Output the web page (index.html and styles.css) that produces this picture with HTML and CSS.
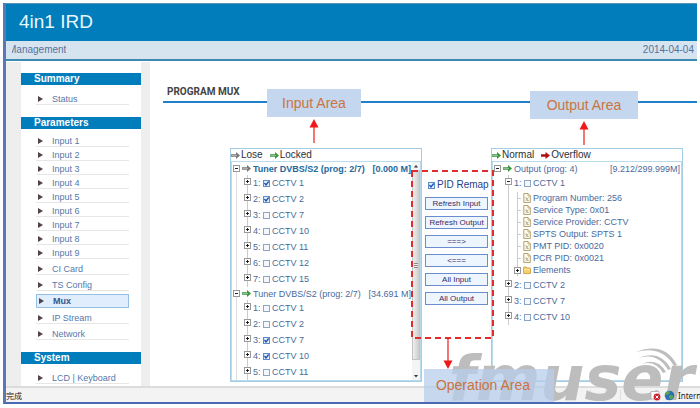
FILE: index.html
```
<!DOCTYPE html>
<html lang="en">
<head>
  <meta charset="utf-8">
  <title>4in1 IRD</title>
  <link rel="stylesheet" href="styles.css">
</head>
<body>
  <!-- shared icons -->
  <svg class="defs" width="0" height="0">
    <symbol id="arrow" viewBox="0 0 9 7">
      <path d="M0 2.2H5V0L9 3.5L5 7V4.8H0Z" fill="currentColor"/>
      <path d="M0.5 3.5H6" stroke="#fff" stroke-width="0.7" opacity="0.6"/>
    </symbol>
    <symbol id="arrow-solid" viewBox="0 0 9 7">
      <path d="M0 2.2H4.5V0L9 3.5L4.5 7V4.8H0Z" fill="currentColor"/>
    </symbol>
    <symbol id="page" viewBox="0 0 8 10">
      <path d="M0.8 0.5H5L7.3 2.8V9.5H0.8Z" fill="#fffbe8" stroke="#a99a62" stroke-width="0.9"/>
      <path d="M5 0.5V3H7.3" fill="none" stroke="#a99a62" stroke-width="0.7"/>
      <path d="M2.2 5H4V7.5H5.8M2.5 7.8L5.5 4.6" fill="none" stroke="#a3a08c" stroke-width="0.8"/>
    </symbol>
    <symbol id="folder" viewBox="0 0 8 10">
      <path d="M0.4 8V2.6Q0.4 2 1 2H3L4 3H7Q7.6 3 7.6 3.6V8Q7.6 8.6 7 8.6H1Q0.4 8.6 0.4 8Z" fill="#f7cf6b" stroke="#c9962e" stroke-width="0.8"/>
      <path d="M1 4.4H7" stroke="#fff0b8" stroke-width="0.8"/>
    </symbol>
    <symbol id="pointer" viewBox="0 0 10 24">
      <path d="M5 7V24" stroke="#f01818" stroke-width="1.2"/>
      <path d="M5 0L9.5 8.5H0.5Z" fill="#f01818"/>
    </symbol>
  </svg>

  <div class="window">
    <header class="header">
      <h1>4in1 IRD</h1>
    </header>
    <div class="subbar">
      <span class="crumb">Management</span>
      <span>2014-04-04</span>
    </div>

    <div class="page">
      <nav class="sidebar">
        <h2>Summary</h2>
        <ul class="menu">
          <li><a href="#">Status</a></li>
        </ul>
        <h2>Parameters</h2>
        <ul class="menu">
          <li class="short"><a href="#">Input 1</a></li>
          <li class="short"><a href="#">Input 2</a></li>
          <li class="short"><a href="#">Input 3</a></li>
          <li class="short"><a href="#">Input 4</a></li>
          <li class="short"><a href="#">Input 5</a></li>
          <li class="short"><a href="#">Input 6</a></li>
          <li class="short"><a href="#">Input 7</a></li>
          <li class="short"><a href="#">Input 8</a></li>
          <li class="short"><a href="#">Input 9</a></li>
          <li><a href="#">CI Card</a></li>
          <li><a href="#">TS Config</a></li>
          <li class="active"><a href="#">Mux</a></li>
          <li><a href="#">IP Stream</a></li>
          <li><a href="#">Network</a></li>
        </ul>
        <h2>System</h2>
        <ul class="menu">
          <li><a href="#">LCD | Keyboard</a></li>
        </ul>
      </nav>

      <main class="main">
        <h3>PROGRAM MUX</h3>

        <div class="mux">
          <section class="panel">
            <div class="legend">
              <svg class="ico gray"><use href="#arrow"/></svg><span>Lose</span>
              <svg class="ico green"><use href="#arrow"/></svg><span>Locked</span>
            </div>
            <div class="tree">
              <div class="nodes linked">
                <div class="tuner lose">
                  <button class="toggle open" aria-label="Collapse"></button>
                  <svg class="ico gray"><use href="#arrow"/></svg>
                  <span>Tuner DVBS/S2 (prog: 2/7)</span><span class="rate">[0.000 M]</span>
                </div>
                <ul class="channels">
                  <li><button class="toggle" aria-label="Expand"></button><span class="num">1:</span><label><input type="checkbox" checked>CCTV 1</label></li>
                  <li><button class="toggle" aria-label="Expand"></button><span class="num">2:</span><label><input type="checkbox" checked>CCTV 2</label></li>
                  <li><button class="toggle" aria-label="Expand"></button><span class="num">3:</span><label><input type="checkbox">CCTV 7</label></li>
                  <li><button class="toggle" aria-label="Expand"></button><span class="num">4:</span><label><input type="checkbox">CCTV 10</label></li>
                  <li><button class="toggle" aria-label="Expand"></button><span class="num">5:</span><label><input type="checkbox">CCTV 11</label></li>
                  <li><button class="toggle" aria-label="Expand"></button><span class="num">6:</span><label><input type="checkbox">CCTV 12</label></li>
                  <li><button class="toggle" aria-label="Expand"></button><span class="num">7:</span><label><input type="checkbox">CCTV 15</label></li>
                </ul>
                <div class="tuner">
                  <button class="toggle open" aria-label="Collapse"></button>
                  <svg class="ico green"><use href="#arrow"/></svg>
                  <span>Tuner DVBS/S2 (prog: 2/7)</span><span class="rate">[34.691 M]</span>
                </div>
                <ul class="channels">
                  <li><button class="toggle" aria-label="Expand"></button><span class="num">1:</span><label><input type="checkbox">CCTV 1</label></li>
                  <li><button class="toggle" aria-label="Expand"></button><span class="num">2:</span><label><input type="checkbox">CCTV 2</label></li>
                  <li><button class="toggle" aria-label="Expand"></button><span class="num">3:</span><label><input type="checkbox" checked>CCTV 7</label></li>
                  <li><button class="toggle" aria-label="Expand"></button><span class="num">4:</span><label><input type="checkbox" checked>CCTV 10</label></li>
                  <li><button class="toggle" aria-label="Expand"></button><span class="num">5:</span><label><input type="checkbox">CCTV 11</label></li>
                </ul>
              </div>
              <div class="scrollbar">
                <svg viewBox="0 0 8 8"><path d="M2 5.5L4 3L6 5.5Z" fill="#333"/></svg>
                <div class="thumb"></div>
                <svg viewBox="0 0 8 8"><path d="M2 3L4 5.5L6 3Z" fill="#333"/></svg>
              </div>
            </div>
            <div class="note note-input">Input Area</div>
            <svg class="pointer pointer-input"><use href="#pointer"/></svg>
          </section>

          <section class="ops">
            <label class="remap"><input type="checkbox" checked>PID Remap</label>
            <button class="btn">Refresh Input</button>
            <button class="btn">Refresh Output</button>
            <button class="btn">===&gt;</button>
            <button class="btn">&lt;===</button>
            <button class="btn">All Input</button>
            <button class="btn">All Output</button>
            <svg class="frame"><rect x="1" y="1" width="81" height="167"/></svg>
            <div class="note note-ops">Operation Area</div>
            <svg class="pointer pointer-ops" viewBox="0 0 10 31"><path d="M5 0V24" stroke="#f01818" stroke-width="1.2"/><path d="M5 31L9.5 22.5H0.5Z" fill="#f01818"/></svg>
          </section>

          <section class="panel">
            <div class="legend">
              <svg class="ico green"><use href="#arrow"/></svg><span>Normal</span>
              <svg class="ico red"><use href="#arrow-solid"/></svg><span>Overflow</span>
            </div>
            <div class="tree">
              <div class="nodes">
                <div class="tuner">
                  <button class="toggle open" aria-label="Collapse"></button>
                  <svg class="ico green"><use href="#arrow"/></svg>
                  <span>Output (prog: 4)</span><span class="rate">[9.212/299.999M]</span>
                </div>
                <ul class="channels">
                  <li><button class="toggle open" aria-label="Collapse"></button><span class="num">1:</span><label><input type="checkbox">CCTV 1</label></li>
                  <li class="sub">
                    <ul class="details">
                      <li><i class="tick"></i><svg><use href="#page"/></svg>Program Number: 256</li>
                      <li><i class="tick"></i><svg><use href="#page"/></svg>Service Type: 0x01</li>
                      <li><i class="tick"></i><svg><use href="#page"/></svg>Service Provider: CCTV</li>
                      <li><i class="tick"></i><svg><use href="#page"/></svg>SPTS Output: SPTS 1</li>
                      <li><i class="tick"></i><svg><use href="#page"/></svg>PMT PID: 0x0020</li>
                      <li><i class="tick"></i><svg><use href="#page"/></svg>PCR PID: 0x0021</li>
                      <li><button class="toggle" aria-label="Expand"></button><svg><use href="#folder"/></svg>Elements</li>
                    </ul>
                  </li>
                  <li><button class="toggle" aria-label="Expand"></button><span class="num">2:</span><label><input type="checkbox">CCTV 2</label></li>
                  <li><button class="toggle" aria-label="Expand"></button><span class="num">3:</span><label><input type="checkbox">CCTV 7</label></li>
                  <li><button class="toggle" aria-label="Expand"></button><span class="num">4:</span><label><input type="checkbox">CCTV 10</label></li>
                </ul>
              </div>
            </div>
            <div class="note note-output">Output Area</div>
            <svg class="pointer pointer-output"><use href="#pointer"/></svg>
          </section>
        </div>
      </main>
    </div>

    <footer class="statusbar">
      <span class="done" lang="zh">完成</span>
      <span class="cell"></span><span class="cell"></span><span class="cell"></span><span class="cell"></span>
      <svg class="blocked" viewBox="0 0 11 11">
        <path d="M1 1.5H9V9H1Z" fill="#fff" stroke="#aaa" stroke-width="0.8"/>
        <circle cx="7" cy="7" r="3.4" fill="#d02030"/>
        <path d="M5.6 5.6L8.4 8.4M8.4 5.6L5.6 8.4" stroke="#fff" stroke-width="1"/>
      </svg>
      <svg class="globe" viewBox="0 0 11 11">
        <circle cx="5.5" cy="5.5" r="4.8" fill="#2c70b8"/>
        <path d="M2 2.5Q4 0.8 6 1.6L5 4L3 5L1 4.8ZM5 5.5L8 5L9.5 6.8L7 9.6L5.4 8.4Z" fill="#58a846"/>
      </svg>
      <span class="zone">Intern</span>
    </footer>

    <div class="brand">
      <span>fmuser</span>
      <svg viewBox="0 0 46 26" fill="#bdbdbd">
        <path d="M4 4Q32 -7 45 17L42 18Q30 -3 4 4Z"/>
        <path d="M6 10Q28 1 39 21L36 22Q26 4 6 10Z"/>
        <path d="M10 16Q25 9 34 24L31 25Q23 12 10 16Z"/>
      </svg>
    </div>
  </div>
</body>
</html>
```
FILE: styles.css
```
* {
  box-sizing: border-box;
}

body {
  margin: 0;
  background: #fff;
  font-family: "Liberation Sans", Arial, sans-serif;
  font-size: 9px;
  color: #4a6a9c;
  overflow: hidden;
}

h1, h2, h3, ul {
  margin: 0;
  padding: 0;
}

ul {
  list-style: none;
}

.defs {
  display: none;
}

.window {
  position: relative;
  margin: 3px 0 0 3px;
  border-left: 3px solid #5a78b8;
  border-bottom: 2px solid #4a68b4;
  overflow: hidden;
}

/* top bars */
.header {
  margin-right: 3px;
  padding: 6px 13px 8px;
  border-top: 1px solid #5b93b5;
  background: #007dba;
}

.header h1 {
  font-size: 19px;
  line-height: 23px;
  font-weight: normal;
  color: #e8f6fd;
}

.subbar {
  display: flex;
  justify-content: space-between;
  margin-right: 3px;
  padding: 0 3px 0 6px;
  border-bottom: 2px solid #3c8ab2;
  background: #d6e4f0;
  font-size: 10px;
  line-height: 18px;
  color: #56729c;
}

.crumb {
  overflow: hidden;
  text-indent: -4px;
}

.page {
  display: flex;
  padding-top: 1px;
}

/* left menu */
.sidebar {
  flex: none;
  width: 144px;
  padding: 11px 0 2px;
  border-left: 15px solid #eee;
  border-right: 9px solid #eee;
}

.sidebar h2 {
  padding-left: 13px;
  background: #007dba;
  font-size: 10px;
  line-height: 12px;
  color: #fff;
}

.menu {
  padding: 4px 12px 12px 15px;
}

.menu:last-child {
  padding-bottom: 0;
}

.menu li {
  padding-top: 6px;
  border-bottom: 1px solid #e6e6e6;
}

.menu .short {
  padding-top: 4px;
}

.menu a {
  display: flex;
  align-items: center;
  line-height: 9px;
  color: #5578ac;
  text-decoration: none;
}

.menu a::before {
  content: "";
  margin: 0 9px 2px 2px;
  border-left: 5px solid #514448;
  border-top: 3px solid transparent;
  border-bottom: 3px solid transparent;
}

.menu .active {
  margin-top: 3px;
  padding: 2px 0 1px;
  border: 1px solid #94c0e6;
  background: #dfedfc;
}

.menu .active a {
  font-weight: bold;
  color: #35558c;
}

/* content */
.main {
  flex: 1;
  padding: 24px 3px 0 13px;
}

.main h3 {
  padding: 0 4px 3px;
  border-bottom: 2px solid #1f7fc8;
  font-family: Roboto, sans-serif;
  font-size: 10px;
  line-height: 12px;
  color: #444;
}

.mux {
  display: grid;
  grid-template-columns: 1fr 69px 1fr;
  margin: 45px 14px 0 67px;
}

.panel {
  position: relative;
  border: 1px solid #a4cce4;
}

.legend {
  display: flex;
  align-items: center;
  gap: 1px;
  height: 12px;
  font-size: 10px;
  line-height: 12px;
  color: #2c3038;
}

.legend span {
  margin-right: 6px;
}

.ico {
  flex: none;
  width: 9px;
  height: 7px;
}

.gray {
  color: #777;
}

.green {
  color: #3a9440;
}

.red {
  color: #b01010;
}

.tree {
  display: flex;
  height: 220px;
  border: 1px solid #b8dcec;
  overflow: hidden;
}

.nodes {
  flex: 1;
}

.linked {
  background: linear-gradient(#ddd, #ddd) 4px 10px / 1px 100% no-repeat;
}

.tuner {
  display: flex;
  align-items: center;
  gap: 2px;
  height: 13px;
  padding: 0 1px;
  white-space: nowrap;
}

.lose {
  font-weight: bold;
  color: #24689c;
}

.rate {
  margin-left: auto;
}

.channels {
  background: linear-gradient(#ccc, #ccc) 15px 0 / 1px 100% no-repeat;
}

.channels > li {
  display: flex;
  align-items: center;
  gap: 2px;
  height: 16px;
  padding-left: 12px;
}

.channels .toggle {
  margin-bottom: 3px;
}

.channels > .sub {
  height: auto;
  padding: 1px 0 1px 21px;
}

.num {
  width: 8px;
}

label {
  display: flex;
  align-items: center;
  gap: 2px;
}

.toggle {
  flex: none;
  width: 7px;
  height: 7px;
  padding: 0;
  border: 1px solid #999;
  background:
    linear-gradient(#222, #222) 1px 2px / 3px 1px no-repeat,
    linear-gradient(#222, #222) 2px 1px / 1px 3px no-repeat,
    #fff;
}

.toggle.open {
  background: linear-gradient(#222, #222) 1px 2px / 3px 1px no-repeat, #fff;
}

input[type="checkbox"] {
  appearance: none;
  flex: none;
  width: 7px;
  height: 7px;
  margin: 0;
  border: 1px solid #8ea6c4;
  background: #f4f8fc;
}

input[type="checkbox"]:checked {
  border-color: #5c8cc8;
  background: #e4f0ff url("data:image/svg+xml,%3Csvg xmlns='http://www.w3.org/2000/svg' viewBox='0 0 5 5'%3E%3Cpath d='M0.4 2L2 4L4.7 0.5' fill='none' stroke='%231c50b0' stroke-width='1.3'/%3E%3C/svg%3E");
}

.details li {
  display: flex;
  align-items: center;
  gap: 2px;
  height: 12px;
  background: linear-gradient(#ccc, #ccc) 3px 0 / 1px 100% no-repeat;
}

.details svg {
  width: 8px;
  height: 10px;
}

.details .toggle {
  margin-bottom: 0;
}

.tick {
  width: 4px;
  height: 1px;
  margin-left: 3px;
  background: #ccc;
}

.scrollbar {
  display: flex;
  flex-direction: column;
  width: 8px;
  background: #f4f4f4;
}

.scrollbar svg {
  height: 8px;
}

.thumb {
  height: 190px;
  margin-bottom: auto;
  border: 1px solid #c4c4c4;
  background:
    repeating-linear-gradient(#888 0 1px, #eee 1px 2px) center / 4px 5px no-repeat,
    linear-gradient(90deg, #eee, #ccc);
}

/* middle column, kept above both panels and the brand */
.ops {
  position: relative;
  z-index: 2;
  display: flex;
  flex-direction: column;
  gap: 6px;
  padding: 31px 3px 0;
}

.remap {
  margin-left: 3px;
  font-size: 10px;
  line-height: 12px;
  white-space: nowrap;
  color: #2a4088;
}

.btn {
  height: 13px;
  padding: 0;
  border: 1px solid #6c8cd0;
  background: #edf5ff;
  font-family: inherit;
  font-size: 8px;
  line-height: 11px;
  color: #3c2c64;
}

.frame {
  position: absolute;
  top: 22px;
  left: -11px;
  width: 83px;
  height: 170px;
  fill: none;
  stroke: #e02c2c;
  stroke-width: 2;
  stroke-dasharray: 6 4;
  pointer-events: none;
}

/* callouts */
.note {
  position: absolute;
  background: #c5d7ee;
  font-size: 14px;
  line-height: 28px;
  text-align: center;
  white-space: nowrap;
  color: #cc7440;
}

.note-input {
  top: -60px;
  left: 36px;
  width: 94px;
}

.note-output {
  top: -58px;
  left: 38px;
  width: 108px;
}

.note-ops {
  top: 221px;
  left: 2px;
  width: 130px;
  padding-right: 12px;
  background: rgba(184, 206, 236, 0.75);
  line-height: 33px;
}

.pointer {
  position: absolute;
  width: 10px;
  height: 24px;
}

.pointer-input {
  top: -30px;
  left: 78px;
}

.pointer-output {
  top: -28px;
  left: 87px;
}

.pointer-ops {
  top: 190px;
  left: 21px;
  height: 31px;
}

/* bottom bar */
.statusbar {
  display: flex;
  align-items: center;
  height: 16px;
  border-top: 2px solid #dcdcdc;
  background: #f3f3f3;
  font-size: 8px;
  color: #222;
}

.done {
  margin-right: auto;
  font-family: "Noto Sans CJK SC", sans-serif;
}

.cell {
  width: 15px;
  height: 10px;
  border-left: 1px solid #dedede;
}

.blocked,
.globe,
.zone {
  position: relative;
  z-index: 2;
}

.blocked,
.globe {
  width: 11px;
  height: 11px;
  margin-right: 3px;
}

.zone {
  width: 22px;
  font-family: "Noto Sans", sans-serif;
  overflow: hidden;
}

.brand {
  position: absolute;
  z-index: 1;
  right: 6px;
  bottom: 0;
  pointer-events: none;
}

.brand span {
  display: block;
  height: 58px;
  font: italic bold 62px/70px "DejaVu Sans", sans-serif;
  color: #bdbdbd;
}

.brand svg {
  position: absolute;
  top: 4px;
  right: 16px;
  width: 46px;
  height: 26px;
}
```
